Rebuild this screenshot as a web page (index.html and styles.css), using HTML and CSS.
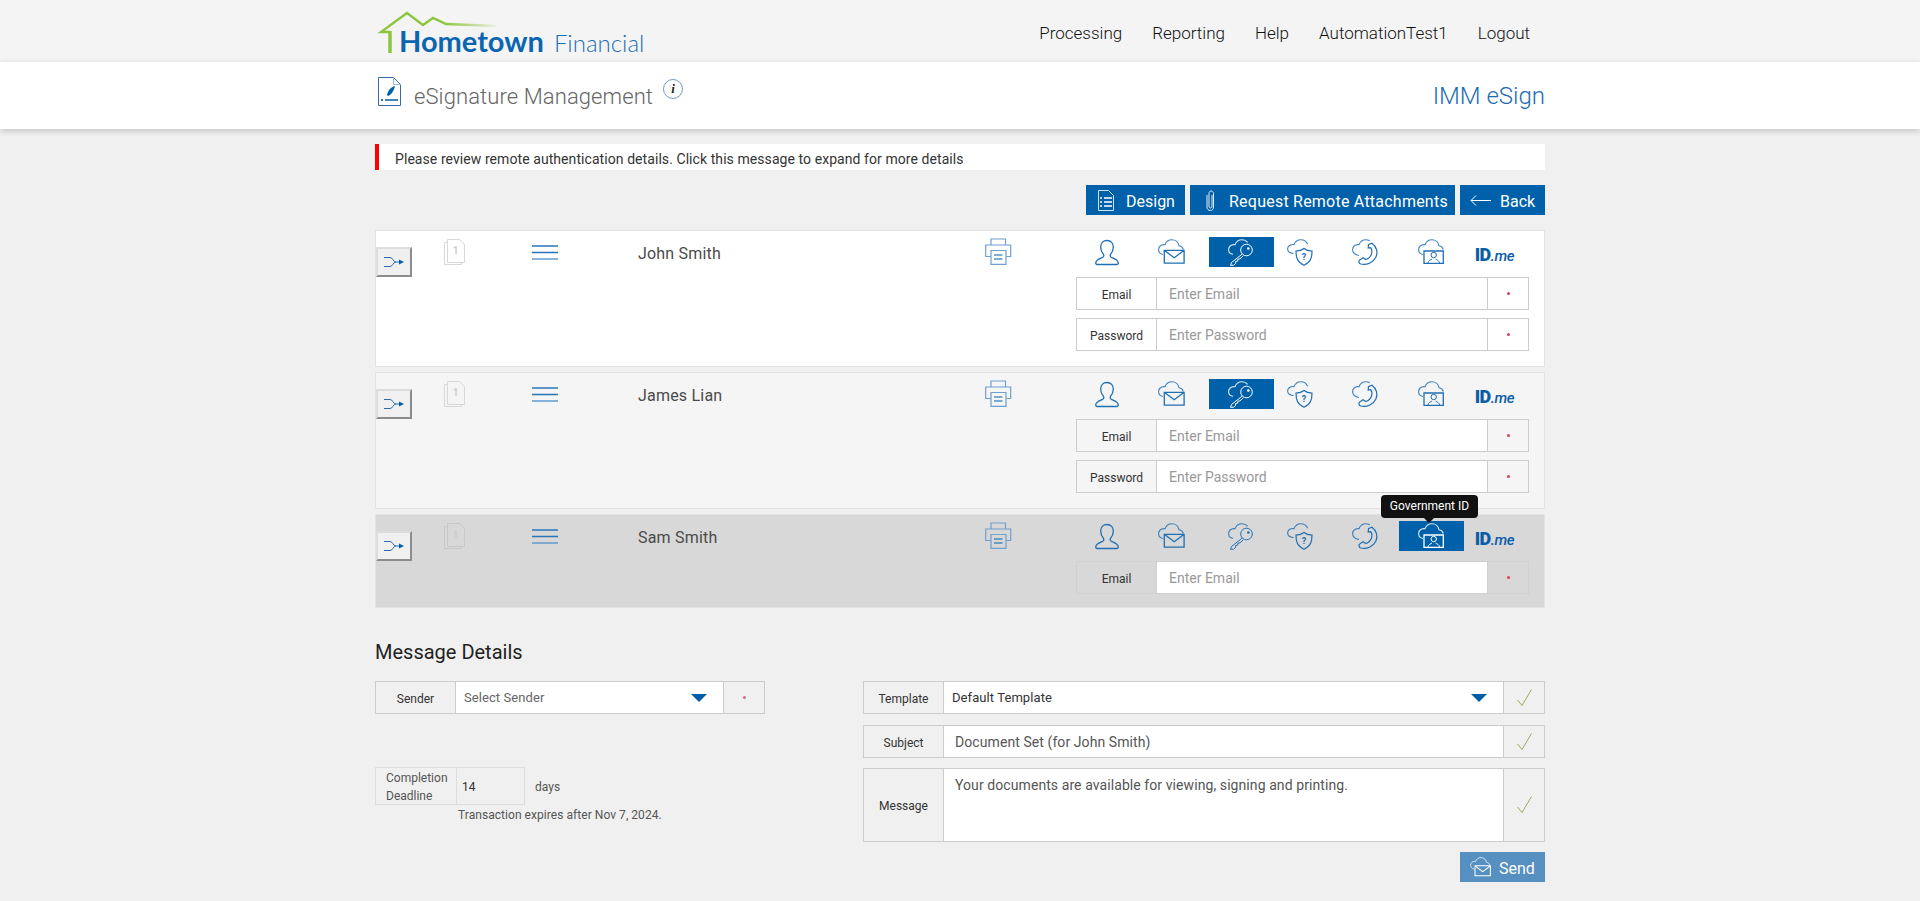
FILE: index.html
```html
<!DOCTYPE html>
<html lang="en">
<head>
<meta charset="utf-8">
<title>eSignature Management</title>
<link rel="stylesheet" href="styles.css">
</head>
<body>
<svg class="sprite" xmlns="http://www.w3.org/2000/svg">
  <symbol id="i-person" viewBox="0 0 24 26"><path fill="none" stroke="currentColor" stroke-width="1.3" d="M12 1c-4 0-6.300 3-6.300 6.500 0 3 1.100 5.500 2.600 7 .6 1 .5 2.600-.5 3.300-2 1.200-6.300 2-7 5.200-.2 1 .4 2 1.300 2h19.800c.9 0 1.500-1 1.300-2-.7-3.200-5-4-7-5.200-1-.7-1.100-2.300-.5-3.300 1.500-1.500 2.600-4 2.600-7C18.300 4 16 1 12 1z"/></symbol>
  <symbol id="i-cloud" viewBox="0 0 28 27"><path fill="none" stroke="currentColor" stroke-width="1.100" opacity=".85" d="M5 15.500C2.500 15 .6 13 .6 10.500.6 7.700 3 5.600 5.800 5.600c.4 0 .8 0 1.200.1C8.100 2.800 10.700.7 13.800.7c3.700 0 6.700 2.600 7.200 6.100 2.200.3 3.800 1.700 4.300 3.700"/></symbol>
  <symbol id="i-mail" viewBox="0 0 28 27"><use href="#i-cloud"/><path fill="none" stroke="currentColor" stroke-width="1.300" d="M6.300 11.300h19.800v12.800H6.300zM6.300 11.300l9.900 7.500 9.900-7.500"/></symbol>
  <symbol id="i-key" viewBox="0 0 28 27"><path fill="none" stroke="currentColor" stroke-width="1.100" opacity=".85" d="M5 15.300C2.500 15 .6 13 .6 10.500.6 7.700 3 5.600 5.800 5.600c.4 0 .8 0 1.200.1C8.100 2.800 10.700.7 13.800.7c2.400 0 4.500 1 5.800 2.700"/><circle cx="18.500" cy="11" r="5.800" fill="none" stroke="currentColor"/><circle cx="20.300" cy="9.500" r="1.300" fill="currentColor"/><path fill="none" stroke="currentColor" d="M14.300 15 3.500 23.500l-1 2.800 3.200-.1 1.800-1.700.1-2 2-.3.3-2 2-.3 3.300-3"/></symbol>
  <symbol id="i-shield" viewBox="0 0 28 27"><path fill="none" stroke="currentColor" stroke-width="1.100" opacity=".85" d="M6.500 14.500C3 14.500.6 12.600.6 10 .6 7.400 3 5.500 5.800 5.500c.4 0 .8 0 1.200.1C8.100 2.800 10.700.7 13.800.7c3.200 0 5.800 1.900 6.800 4.600"/><path fill="none" stroke="currentColor" stroke-width="1.200" d="M17 9.500c2 1.700 5 2.600 8 2.600 0 6-1 11-8 14.200-7-3.200-8-8.200-8-14.200 3 0 6-.9 8-2.600z"/><text class="q" x="17" y="21.300" text-anchor="middle">?</text></symbol>
  <symbol id="i-phone" viewBox="0 0 28 27"><path fill="none" stroke="currentColor" stroke-width="1.100" opacity=".85" d="M7 16.500C3 15.800.6 13.300.6 10.500.6 7.700 3 5.600 5.800 5.600c.4 0 .8 0 1.200.1C8.100 2.800 10.700.7 13.800.7c1.500 0 2.800.4 4 1"/><path fill="none" stroke="currentColor" stroke-width="1.200" d="M16.500 5.500l3.500-1.300c4.500 3.300 6.300 9 3.800 14-2.700 5.500-9 8.300-15 6.800-1.700-.6-2.200-2.200-1.500-3.700l3.700-2.600 2.800 1.800c2.700-.8 4.800-3 5.700-5.500.7-2.300.4-4.700-.8-6.300l-2.500.4z"/></symbol>
  <symbol id="i-idcard" viewBox="0 0 28 27"><use href="#i-cloud"/><path fill="none" stroke="currentColor" stroke-width="1.300" d="M6 12h19.300v12.300H6z"/><circle cx="15.700" cy="16" r="2.700" fill="none" stroke="currentColor"/><path fill="none" stroke="currentColor" d="M10 24c.3-2.500 2.500-3 4-4M21.500 24c-.3-2.500-2.500-3-4-4"/></symbol>
</svg>

<header class="topbar">
  <div class="wrap topbar-inner">
    <a class="logo">
      <svg class="logo-house" width="130" height="46" viewBox="0 0 130 46" aria-hidden="true">
        <defs><linearGradient id="fade" x1="0" x2="1" y1="0" y2="0"><stop offset=".55" stop-color="#8cc63f"/><stop offset="1" stop-color="#8cc63f" stop-opacity=".1"/></linearGradient></defs>
        <path fill="none" stroke="url(#fade)" stroke-width="2.400" d="M15 22H6L32 3l16 12 10-7 13 6 50 2"/>
        <path stroke="#8cc63f" stroke-width="3.500" d="M15 21v22"/>
      </svg>
      <span class="logo-main">Hometown</span><span class="logo-sub">Financial</span>
    </a>
    <nav class="nav">
      <a>Processing</a><a>Reporting</a><a>Help</a><a>AutomationTest1</a><a>Logout</a>
    </nav>
  </div>
</header>

<section class="subbar">
  <div class="wrap subbar-inner">
    <svg class="page-icon" width="23" height="29" viewBox="0 0 23 29" aria-hidden="true">
      <path fill="none" stroke="#3a6aa8" d="M.5.500h15l7 7v21H.5z"/><path fill="none" stroke="#9db8d8" d="M15.500.500v7h7"/>
      <path fill="#0060a9" d="M17 9c-4 1-7 4-8 9l1 1c3-1 6-5 7-10z"/><path stroke="#0060a9" stroke-width="1.500" d="M7 23h13"/><path stroke="#3a6aa8" d="M3 22l2 2m0-2l-2 2"/>
    </svg>
    <h1 class="page-title">eSignature Management</h1>
    <span class="info"><i>i</i></span>
    <div class="app-name">IMM eSign</div>
  </div>
</section>

<main class="wrap">
  <div class="alert">Please review remote authentication details. Click this message to expand for more details</div>

  <div class="actions">
    <a class="btn btn-design">
      <svg width="16" height="21" viewBox="0 0 16 21" aria-hidden="true"><path fill="none" stroke="#cfe2f3" d="M.5.500h10l5 5v15H.5z"/><path stroke="#fff" stroke-width="1.500" d="M2 8h2m2 0h8M2 12h2m2 0h8M2 16h2m2 0h8"/></svg>
      <span>Design</span>
    </a>
    <a class="btn btn-attach">
      <svg width="9" height="21" viewBox="0 0 9 21" aria-hidden="true"><path fill="none" stroke="#e3eef8" d="M6 5v11c0 1.500-.7 2-1.500 2S3 17.500 3 16V3.500C3 2 3.800 1 5 1s2.500 1 2.500 2.500V17c0 2-1.300 3.500-3.200 3.500S1 19 1 17V5"/></svg>
      <span>Request Remote Attachments</span>
    </a>
    <a class="btn btn-back">
      <svg width="21" height="11" viewBox="0 0 21 11" aria-hidden="true"><path fill="none" stroke="#fff" d="M21 5.500H1M6 .500l-5 5 5 5"/></svg>
      <span>Back</span>
    </a>
  </div>

  <div class="rows">
    <article class="row">
      <button class="toggle" type="button"><svg width="20" height="10" viewBox="0 0 20 10" aria-hidden="true"><path fill="none" stroke="#2a6cb0" d="M0 .500h6c3 0 3 4.500 6 4.500h5M0 9.500h6c3 0 3-4.500 6-4.500"/><path fill="#0060a9" d="M15 2.500 20 5l-5 2.500z"/></svg></button>
      <svg class="doc" width="21" height="26" viewBox="0 0 21 26" aria-hidden="true"><path fill="#fff" stroke="#d8d8d8" d="M.5 3.500h17v22H.5z"/><path fill="#fff" stroke="#d8d8d8" d="M3.500.500h12l5 5v18h-17z"/><text class="doc-num" x="11.500" y="15" text-anchor="middle">1</text></svg>
      <svg class="menu" width="26" height="15" viewBox="0 0 26 15" aria-hidden="true"><path stroke="#2a75b8" stroke-width="1.500" d="M0 1h26M0 7.500h26"/><path stroke="#5f9bd0" stroke-width="1.500" d="M0 14h26"/></svg>
      <div class="name">John Smith</div>
      <svg class="printer" width="27" height="27" viewBox="0 0 27 27" aria-hidden="true"><g fill="none" stroke="#6ea0d0" stroke-width="1.200"><path d="M6 7V1h14.500v6"/><path d="M6 18.500H.7V7h25v11.500h-5"/><path fill="#fff" d="M6 12.500h15v13.800H6z"/></g><path stroke="#0060a9" stroke-width="1.200" d="M9 17h8.500M9 21h8.500"/></svg>
      <div class="auth">
        <div class="tabs">
          <span class="tab t-person"><svg width="24" height="27"><use href="#i-person"/></svg></span>
          <span class="tab t-mail"><svg width="28" height="27"><use href="#i-mail"/></svg></span>
          <span class="tab t-key is-active"><svg width="28" height="27"><use href="#i-key"/></svg></span>
          <span class="tab t-shield"><svg width="28" height="27"><use href="#i-shield"/></svg></span>
          <span class="tab t-phone"><svg width="28" height="27"><use href="#i-phone"/></svg></span>
          <span class="tab t-id"><svg width="28" height="27"><use href="#i-idcard"/></svg></span>
          <span class="tab t-idme"><b>ID</b><em>.me</em></span>
        </div>
        <div class="field"><span class="label">Email</span><span class="control placeholder">Enter Email</span><span class="addon"><i class="dot"></i></span></div>
        <div class="field"><span class="label">Password</span><span class="control placeholder">Enter Password</span><span class="addon"><i class="dot"></i></span></div>
      </div>
    </article>

    <article class="row row-alt">
      <button class="toggle" type="button"><svg width="20" height="10" viewBox="0 0 20 10" aria-hidden="true"><path fill="none" stroke="#2a6cb0" d="M0 .500h6c3 0 3 4.500 6 4.500h5M0 9.500h6c3 0 3-4.500 6-4.500"/><path fill="#0060a9" d="M15 2.500 20 5l-5 2.500z"/></svg></button>
      <svg class="doc" width="21" height="26" viewBox="0 0 21 26" aria-hidden="true"><path fill="#f5f5f5" stroke="#d8d8d8" d="M.5 3.500h17v22H.5z"/><path fill="#f5f5f5" stroke="#d8d8d8" d="M3.500.500h12l5 5v18h-17z"/><text class="doc-num" x="11.500" y="15" text-anchor="middle">1</text></svg>
      <svg class="menu" width="26" height="15" viewBox="0 0 26 15" aria-hidden="true"><path stroke="#2a75b8" stroke-width="1.500" d="M0 1h26M0 7.500h26"/><path stroke="#5f9bd0" stroke-width="1.500" d="M0 14h26"/></svg>
      <div class="name">James Lian</div>
      <svg class="printer" width="27" height="27" viewBox="0 0 27 27" aria-hidden="true"><g fill="none" stroke="#6ea0d0" stroke-width="1.200"><path d="M6 7V1h14.500v6"/><path d="M6 18.500H.7V7h25v11.500h-5"/><path fill="#f5f5f5" d="M6 12.500h15v13.800H6z"/></g><path stroke="#0060a9" stroke-width="1.200" d="M9 17h8.500M9 21h8.500"/></svg>
      <div class="auth">
        <div class="tabs">
          <span class="tab t-person"><svg width="24" height="27"><use href="#i-person"/></svg></span>
          <span class="tab t-mail"><svg width="28" height="27"><use href="#i-mail"/></svg></span>
          <span class="tab t-key is-active"><svg width="28" height="27"><use href="#i-key"/></svg></span>
          <span class="tab t-shield"><svg width="28" height="27"><use href="#i-shield"/></svg></span>
          <span class="tab t-phone"><svg width="28" height="27"><use href="#i-phone"/></svg></span>
          <span class="tab t-id"><svg width="28" height="27"><use href="#i-idcard"/></svg></span>
          <span class="tab t-idme"><b>ID</b><em>.me</em></span>
        </div>
        <div class="field"><span class="label">Email</span><span class="control placeholder">Enter Email</span><span class="addon"><i class="dot"></i></span></div>
        <div class="field"><span class="label">Password</span><span class="control placeholder">Enter Password</span><span class="addon"><i class="dot"></i></span></div>
      </div>
    </article>

    <article class="row row-selected">
      <button class="toggle" type="button"><svg width="20" height="10" viewBox="0 0 20 10" aria-hidden="true"><path fill="none" stroke="#2a6cb0" d="M0 .500h6c3 0 3 4.500 6 4.500h5M0 9.500h6c3 0 3-4.500 6-4.500"/><path fill="#0060a9" d="M15 2.500 20 5l-5 2.500z"/></svg></button>
      <svg class="doc" width="21" height="26" viewBox="0 0 21 26" aria-hidden="true"><path fill="#d8d8d8" stroke="#c8c8c8" d="M.5 3.500h17v22H.5z"/><path fill="#d8d8d8" stroke="#c8c8c8" d="M3.500.500h12l5 5v18h-17z"/><text class="doc-num" x="11.500" y="15" text-anchor="middle">1</text></svg>
      <svg class="menu" width="26" height="15" viewBox="0 0 26 15" aria-hidden="true"><path stroke="#2a75b8" stroke-width="1.500" d="M0 1h26M0 7.500h26"/><path stroke="#5f9bd0" stroke-width="1.500" d="M0 14h26"/></svg>
      <div class="name">Sam Smith</div>
      <svg class="printer" width="27" height="27" viewBox="0 0 27 27" aria-hidden="true"><g fill="none" stroke="#6ea0d0" stroke-width="1.200"><path d="M6 7V1h14.500v6"/><path d="M6 18.500H.7V7h25v11.500h-5"/><path fill="#d8d8d8" d="M6 12.500h15v13.800H6z"/></g><path stroke="#0060a9" stroke-width="1.200" d="M9 17h8.500M9 21h8.500"/></svg>
      <div class="auth">
        <div class="tabs">
          <span class="tab t-person"><svg width="24" height="27"><use href="#i-person"/></svg></span>
          <span class="tab t-mail"><svg width="28" height="27"><use href="#i-mail"/></svg></span>
          <span class="tab t-key"><svg width="28" height="27"><use href="#i-key"/></svg></span>
          <span class="tab t-shield"><svg width="28" height="27"><use href="#i-shield"/></svg></span>
          <span class="tab t-phone"><svg width="28" height="27"><use href="#i-phone"/></svg></span>
          <span class="tab t-id is-active"><svg width="28" height="27"><use href="#i-idcard"/></svg><span class="tooltip">Government ID</span></span>
          <span class="tab t-idme"><b>ID</b><em>.me</em></span>
        </div>
        <div class="field"><span class="label">Email</span><span class="control placeholder">Enter Email</span><span class="addon"><i class="dot"></i></span></div>
      </div>
    </article>
  </div>

  <h2 class="section-title">Message Details</h2>

  <section class="message">
    <div class="message-left">
      <div class="field field-plain">
        <span class="label">Sender</span>
        <span class="control control-select muted">Select Sender<i class="caret"></i></span>
        <span class="addon"><i class="dot dot-pink"></i></span>
      </div>
      <div class="deadline">
        <span class="deadline-label">Completion Deadline</span>
        <span class="deadline-value">14</span>
        <span class="deadline-unit">days</span>
      </div>
      <p class="expires">Transaction expires after Nov 7, 2024.</p>
    </div>

    <div class="message-right">
      <div class="field field-plain">
        <span class="label">Template</span>
        <span class="control control-select dark">Default Template<i class="caret"></i></span>
        <span class="addon"><svg class="check" width="15" height="18" viewBox="0 0 15 18" aria-hidden="true"><path fill="none" stroke="#9aaa66" d="M.5 11l4.500 5.500L14.500.5"/></svg></span>
      </div>
      <div class="field field-plain field-subject">
        <span class="label">Subject</span>
        <span class="control text">Document Set (for John Smith)</span>
        <span class="addon"><svg class="check" width="15" height="18" viewBox="0 0 15 18" aria-hidden="true"><path fill="none" stroke="#9aaa66" d="M.5 11l4.500 5.500L14.500.5"/></svg></span>
      </div>
      <div class="field field-plain field-message">
        <span class="label">Message</span>
        <span class="control text text-top">Your documents are available for viewing, signing and printing.</span>
        <span class="addon"><svg class="check" width="15" height="18" viewBox="0 0 15 18" aria-hidden="true"><path fill="none" stroke="#9aaa66" d="M.5 11l4.500 5.500L14.500.5"/></svg></span>
      </div>
      <div class="send-row">
        <a class="btn btn-send"><svg width="22" height="21" viewBox="0 0 28 27" aria-hidden="true"><use href="#i-mail"/></svg><span>Send</span></a>
      </div>
    </div>
  </section>
</main>
</body>
</html>
```

FILE: styles.css
```css
* { box-sizing: border-box; }
html, body { margin: 0; padding: 0; }
body { background: #f0f0f0; font-family: Roboto, "Liberation Sans", sans-serif; color: #333; }
.sprite { display: none; }
.wrap { width: 1170px; margin: 0 auto; }

.topbar { background: #f4f4f4; height: 62px; }
.topbar-inner { display: flex; justify-content: space-between; height: 62px; }
.logo { position: relative; display: flex; align-items: baseline; padding: 24px 0 0 24px; color: #0b66b0; font-family: Lato, sans-serif; line-height: 33px; }
.logo-house { position: absolute; left: 0; top: 10px; }
.logo-main { font-size: 29px; font-weight: 700; }
.logo-sub { font-size: 24px; font-weight: 300; margin-left: 10px; color: #1d6fb4; }
.nav { display: flex; gap: 30px; padding: 23px 15px 0 0; font-size: 17px; font-weight: 300; line-height: 20px; color: #111; }

.subbar { background: #fff; height: 67px; box-shadow: 0 2px 6px rgba(0,0,0,.18); position: relative; }
.subbar-inner { display: flex; height: 67px; align-items: flex-start; }
.page-icon { margin: 15px 0 0 3px; }
.page-title { margin: 20px 0 0 13px; font-size: 22px; font-weight: 300; line-height: 30px; letter-spacing: .1px; color: #666; }
.info { width: 20px; height: 20px; margin: 17px 0 0 10px; border: 1px solid #6f9cc8; border-radius: 50%; display: flex; align-items: center; justify-content: center; font: italic bold 13px "Liberation Serif", serif; color: #222; }
.app-name { margin: 19px 0 0 auto; font-size: 24px; font-weight: 300; line-height: 30px; color: #1c6cb0; }

.alert { margin-top: 15px; height: 26px; background: #fff; border-left: 4px solid #f00; padding: 2px 0 0 16px; font-size: 14px; line-height: 26px; letter-spacing: .07px; color: #333; }

.actions { display: flex; justify-content: flex-end; gap: 5px; margin-top: 15px; }
.btn { display: flex; align-items: center; height: 30px; background: #0060a9; color: #fff; font-size: 16px; }
.btn span { padding-top: 2px; }
.btn-design { width: 99px; padding-left: 12px; gap: 12px; }
.btn-attach { width: 265px; padding-left: 16px; gap: 14px; letter-spacing: .23px; }
.btn-back { width: 85px; padding-left: 10px; gap: 9px; }

.rows { display: flex; flex-direction: column; gap: 5px; margin-top: 15px; }
.row { display: grid; grid-template-columns: 68px 88px 106px 347px 89px 1fr; align-items: start; padding: 6px 15px 15px 0; background: #fff; border: 1px solid #e2e2e2; }
.row-alt { background: #f5f5f5; }
.row-selected { background: #d8d8d8; border-color: #e4e4e4; padding-bottom: 13px; }
.toggle { width: 36px; height: 30px; margin-top: 10px; padding: 0; background: #f0f0f0; border-style: solid; border-width: 2px; border-color: #ddd #8c8c8c #8c8c8c #ddd; display: flex; align-items: center; justify-content: center; }
.doc { margin-top: 2px; }
.doc-num { font: bold 10px Roboto, sans-serif; fill: #ccc; }
.menu { margin-top: 8px; }
.name { margin-top: 7px; font-size: 16px; line-height: 20px; letter-spacing: .2px; color: #4a4a4a; }
.printer { margin-top: 1px; }
.q { font: bold 9px Roboto, sans-serif; fill: currentColor; }

.auth { display: flex; flex-direction: column; gap: 8px; }
.tabs { display: flex; height: 30px; margin-bottom: 2px; }
.tab { position: relative; flex: none; width: 65px; height: 30px; display: flex; align-items: center; justify-content: center; color: #1f6fb4; }
.tab.is-active { background: #0060a9; color: #fff; }
.t-key { margin-left: 5px; }
.t-shield { margin-left: -6px; }
.t-id { margin-left: 1px; }
.t-idme { margin-left: -2px; color: #0b5ea6; align-items: baseline; padding-top: 6px; line-height: 24px; }
.t-idme b { font-size: 18px; font-weight: 900; letter-spacing: -.5px; }
.t-idme em { font-size: 15px; font-weight: 500; letter-spacing: -.3px; }
.tooltip { position: absolute; left: -18px; top: -26px; width: 97px; height: 23px; border-radius: 4px; background: #111; color: #fff; font-size: 12px; line-height: 23px; text-align: center; }
.tooltip::after { content: ""; position: absolute; left: 43px; top: 23px; border: 5px solid transparent; border-top-color: #111; border-bottom-width: 0; }

.field { display: flex; height: 33px; margin-left: 2px; border: 1px solid #ccc; }
.label { flex: none; width: 80px; padding-top: 2px; border-right: 1px solid #ccc; display: flex; align-items: center; justify-content: center; font-size: 12px; color: #333; }
.control { flex: 1; display: flex; align-items: center; padding-left: 12px; background: #fff; font-size: 14px; }
.placeholder { color: #999; }
.addon { flex: none; width: 41px; border-left: 1px solid #ccc; display: flex; align-items: center; justify-content: center; }
.dot { width: 3px; height: 3px; border-radius: 50%; background: #e0405a; }
.dot-pink { background: #e8608a; }
.row-selected .field { border-color: #d0d0d0; }
.row-selected .label, .row-selected .addon { border-color: #d0d0d0; }

.section-title { margin: 32px 0 0; font-size: 20px; font-weight: 400; line-height: 24px; color: #222; }

.message { display: flex; justify-content: space-between; margin-top: 17px; padding-bottom: 19px; }
.message-left { width: 390px; }
.message-right { width: 682px; }
.field-plain { margin-left: 0; }
.control-select { position: relative; padding-left: 8px; padding-right: 16px; justify-content: space-between; font-size: 13px; letter-spacing: .08px; }
.muted { color: #666; }
.dark { color: #333; }
.caret { width: 0; height: 0; border: 8px solid transparent; border-top-color: #005ea8; border-bottom-width: 0; }
.text { padding-left: 11px; color: #555; letter-spacing: .08px; }
.text-top { align-items: flex-start; padding-top: 6px; line-height: 20px; }
.field-subject { margin-top: 11px; }
.field-message { margin-top: 10px; height: 74px; }
.send-row { display: flex; justify-content: flex-end; margin-top: 10px; }
.btn-send { width: 85px; padding-left: 10px; gap: 7px; background: #5590c1; }

.deadline { display: flex; margin-top: 53px; height: 38px; }
.deadline-label { width: 81px; padding: 1px 8px 0 10px; border: 1px solid #ddd; border-right: 0; font-size: 12px; line-height: 18px; color: #555; }
.deadline-value { width: 69px; padding-left: 5px; border: 1px solid #ddd; font-size: 12px; line-height: 38px; color: #333; }
.deadline-unit { margin-left: 10px; font-size: 12px; line-height: 40px; color: #555; }
.expires { margin: 2px 0 0 83px; font-size: 12px; line-height: 16px; letter-spacing: .05px; color: #555; }
```
